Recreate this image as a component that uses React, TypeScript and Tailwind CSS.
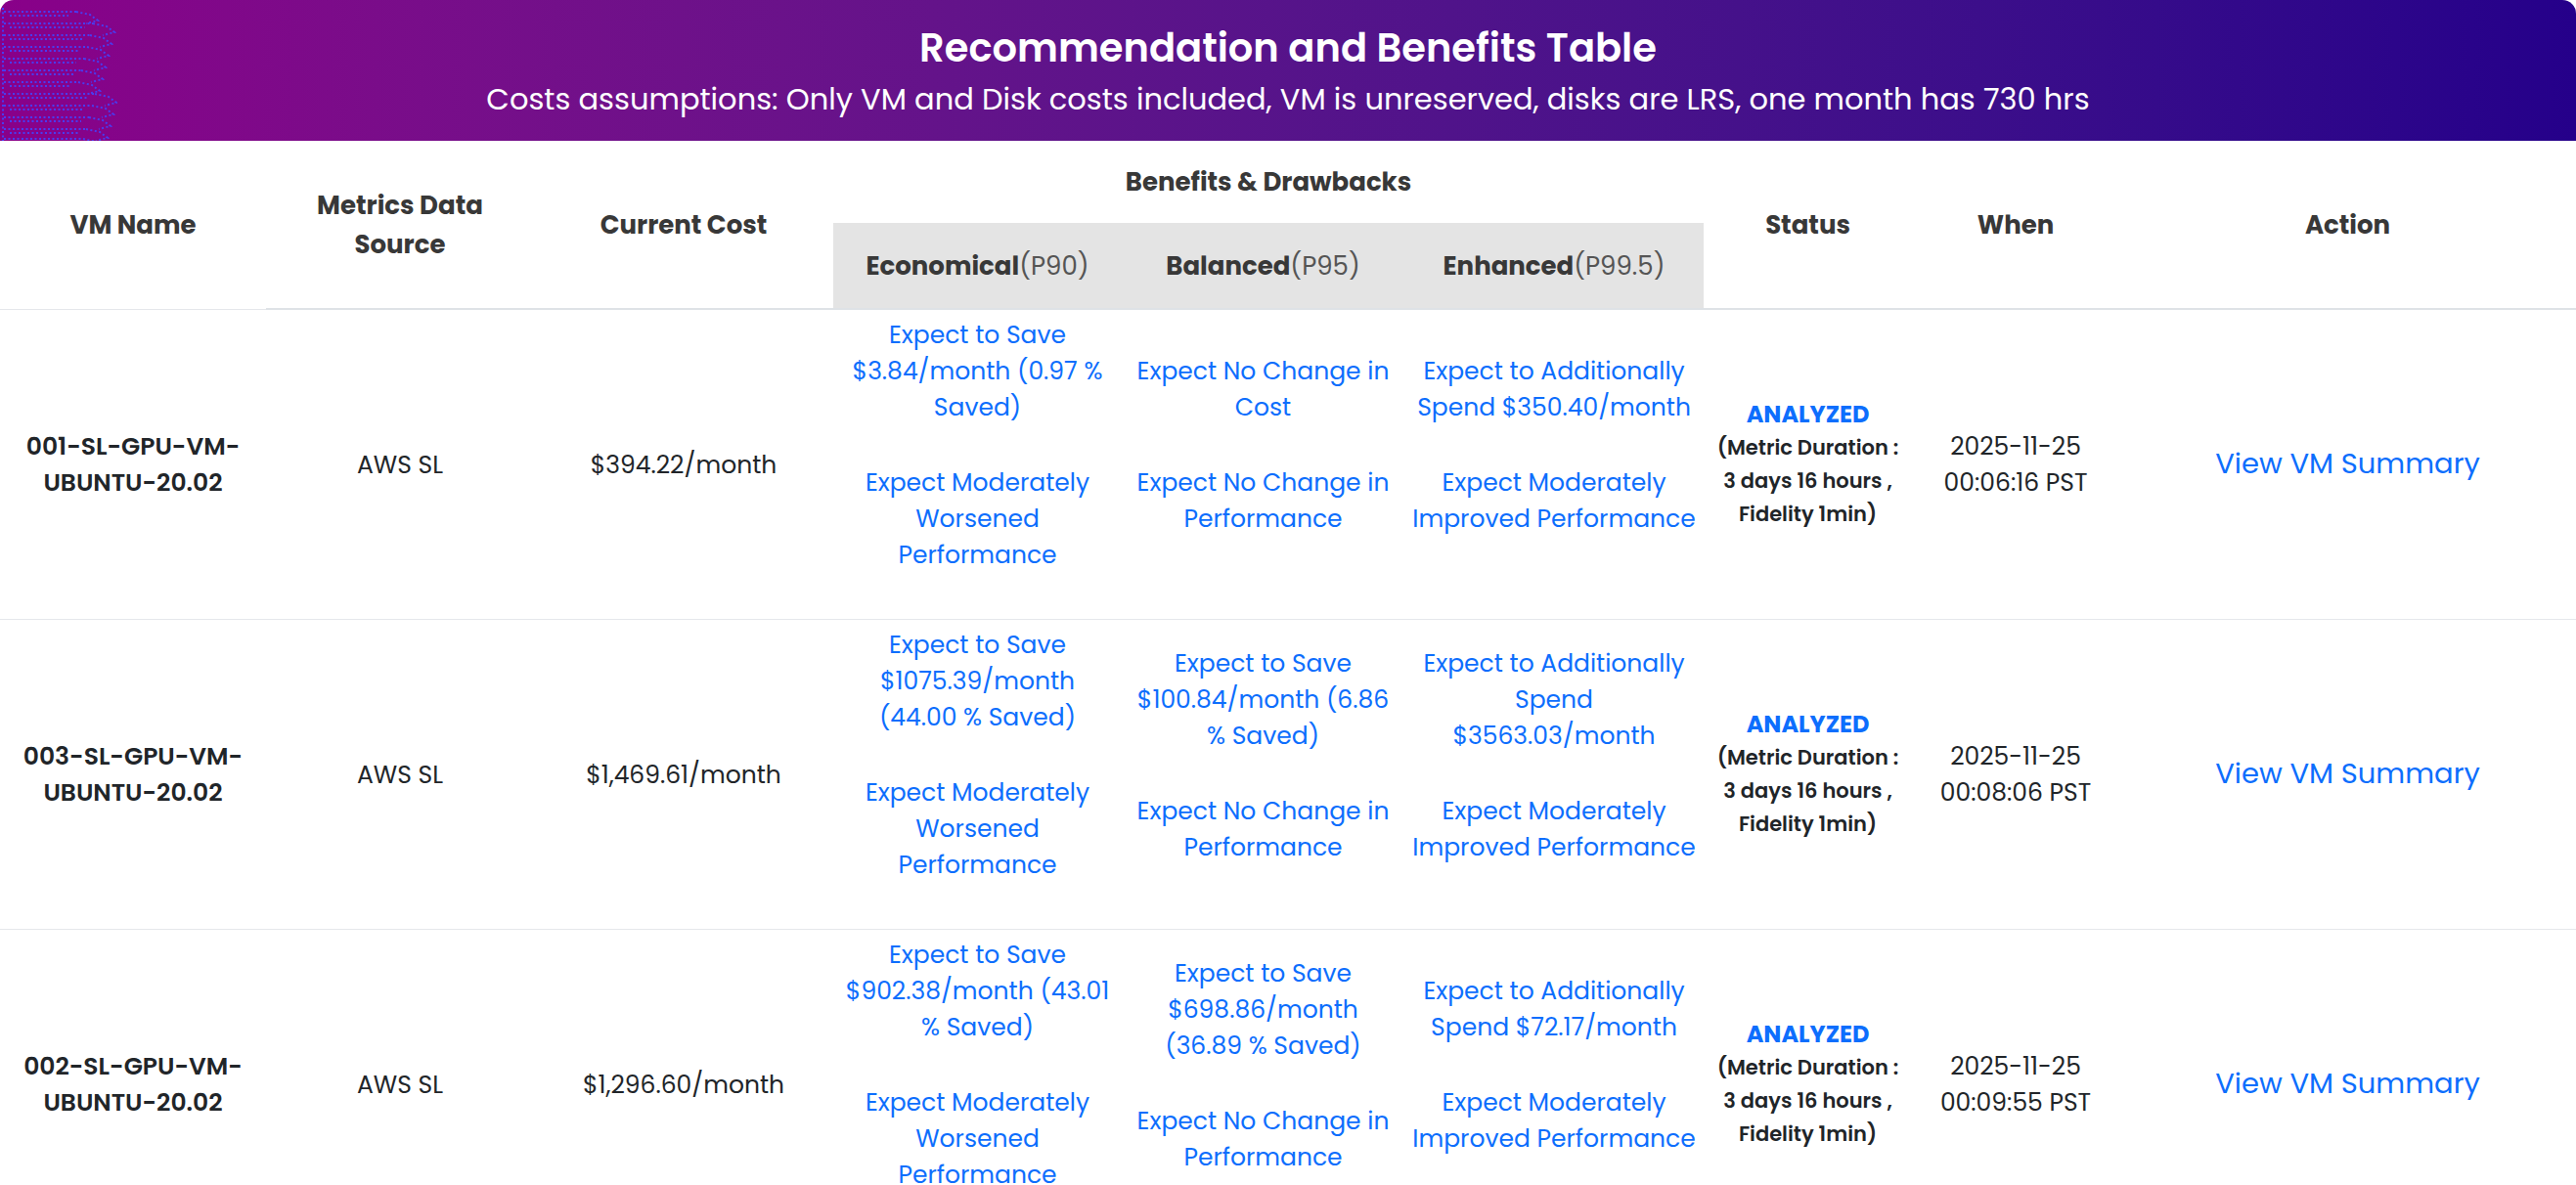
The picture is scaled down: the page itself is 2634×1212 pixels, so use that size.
import React from 'react';

type Row = {
  vm: string;
  source: string;
  cost: string;
  economical: string[];
  balanced: string[];
  enhanced: string[];
  date: string;
  time: string;
};

const rows: Row[] = [
  {
    vm: '001-SL-GPU-VM-UBUNTU-20.02',
    source: 'AWS SL',
    cost: '$394.22/month',
    economical: ['Expect to Save $3.84/month (0.97 % Saved)', 'Expect Moderately Worsened Performance'],
    balanced: ['Expect No Change in Cost', 'Expect No Change in Performance'],
    enhanced: ['Expect to Additionally Spend $350.40/month', 'Expect Moderately Improved Performance'],
    date: '2025-11-25',
    time: '00:06:16 PST',
  },
  {
    vm: '003-SL-GPU-VM-UBUNTU-20.02',
    source: 'AWS SL',
    cost: '$1,469.61/month',
    economical: ['Expect to Save $1075.39/month (44.00 % Saved)', 'Expect Moderately Worsened Performance'],
    balanced: ['Expect to Save $100.84/month (6.86 % Saved)', 'Expect No Change in Performance'],
    enhanced: ['Expect to Additionally Spend $3563.03/month', 'Expect Moderately Improved Performance'],
    date: '2025-11-25',
    time: '00:08:06 PST',
  },
  {
    vm: '002-SL-GPU-VM-UBUNTU-20.02',
    source: 'AWS SL',
    cost: '$1,296.60/month',
    economical: ['Expect to Save $902.38/month (43.01 % Saved)', 'Expect Moderately Worsened Performance'],
    balanced: ['Expect to Save $698.86/month (36.89 % Saved)', 'Expect No Change in Performance'],
    enhanced: ['Expect to Additionally Spend $72.17/month', 'Expect Moderately Improved Performance'],
    date: '2025-11-25',
    time: '00:09:55 PST',
  },
];

// dotted "circuit" lines on the left edge of the banner
function BannerPattern() {
  const lines = [8, 20, 32, 44, 56, 68, 80, 92, 104, 116, 128, 138];
  return (
    <svg width="120" height="140" viewBox="0 0 120 140" className="absolute left-0 top-1" fill="none">
      {lines.map((y, i) => {
        const len = 78 + ((i * 17) % 20);
        return (
          <g key={y} stroke="#4a3cf0" strokeWidth="2" strokeDasharray="2 2.5">
            <line x1="4" y1={y} x2={len} y2={y} />
            <line x1="10" y1={y + 4} x2={len - 8} y2={y + 4} />
            <polyline points={`${len},${y} ${len + 14},${y + 3} ${len + 22},${y + 9} ${len + 10},${y + 12}`} />
          </g>
        );
      })}
      <line x1="3" y1="4" x2="3" y2="140" stroke="#4a3cf0" strokeWidth="2" strokeDasharray="2 2.5" />
    </svg>
  );
}

function Outcome({ items, wide }: { items: string[]; wide?: boolean }) {
  return (
    <td className={wide ? 'px-[7.5px] py-[7px] align-middle text-center text-[#0d6efd]' : 'px-3 py-[7px] align-middle text-center text-[#0d6efd]'}>
      {items.map((t) => (
        <p key={t} className="mb-10">
          {t}
        </p>
      ))}
    </td>
  );
}

export default function App() {
  return (
    <div className="min-h-screen bg-white font-['Poppins','Open_Sans',sans-serif] text-[#212529]">
      <div className="relative h-[144px] overflow-hidden rounded-t-[14px] bg-gradient-to-r from-[#890089] to-[#25008a] pt-[21px] text-center text-white">
        <BannerPattern />
        <h1 className="text-[40px] font-semibold leading-[56px]">Recommendation and Benefits Table</h1>
        <p className="mt-[3px] text-[30.5px] leading-[44px]">
          Costs assumptions: Only VM and Disk costs included, VM is unreserved, disks are LRS, one month has 730 hrs
        </p>
      </div>

      <table className="w-full table-fixed border-collapse text-[25px] leading-[37px]">
        <colgroup>
          <col className="w-[272px]" />
          <col className="w-[274px]" />
          <col className="w-[306px]" />
          <col className="w-[295px]" />
          <col className="w-[289px]" />
          <col className="w-[306px]" />
          <col className="w-[213px]" />
          <col className="w-[212px]" />
          <col />
        </colgroup>
        <thead className="text-[26px] font-semibold leading-[40px] text-[#383838]">
          <tr className="h-[84px]">
            <th rowSpan={2} className="border-b border-[#e5e7eb] px-2 align-middle">VM Name</th>
            <th rowSpan={2} className="border-b-2 border-[#dee2e6] px-8 align-middle">Metrics Data Source</th>
            <th rowSpan={2} className="border-b-2 border-[#dee2e6] px-2 align-middle">Current Cost</th>
            <th colSpan={3} className="px-2 align-middle">Benefits &amp; Drawbacks</th>
            <th rowSpan={2} className="border-b-2 border-[#dee2e6] px-2 align-middle">Status</th>
            <th rowSpan={2} className="border-b-2 border-[#dee2e6] px-2 align-middle">When</th>
            <th rowSpan={2} className="border-b-2 border-[#dee2e6] px-2 align-middle">Action</th>
          </tr>
          <tr className="h-[88px] bg-[#e4e4e4]">
            <th className="border-b-2 border-[#dee2e6] px-2 align-middle">
              Economical<span className="font-normal text-[#555]">(P90)</span>
            </th>
            <th className="border-b-2 border-[#dee2e6] px-2 align-middle">
              Balanced<span className="font-normal text-[#555]">(P95)</span>
            </th>
            <th className="border-b-2 border-[#dee2e6] px-2 align-middle">
              Enhanced<span className="font-normal text-[#555]">(P99.5)</span>
            </th>
          </tr>
        </thead>
        <tbody>
          {rows.map((r) => (
            <tr key={r.vm} className="h-[316px] border-b border-[#e5e7eb]">
              <td className="px-3 text-center font-semibold text-[#212529]">{r.vm}</td>
              <td className="px-3 text-center">{r.source}</td>
              <td className="px-3 text-center">{r.cost}</td>
              <Outcome items={r.economical} />
              <Outcome items={r.balanced} />
              <Outcome items={r.enhanced} wide />
              <td className="px-[6px] text-center">
                <div className="text-[24px] font-bold leading-[34px] text-[#0d6efd]">ANALYZED</div>
                <div className="text-[21px] font-semibold leading-[34px] text-[#212529]">
                  (Metric Duration : 3 days 16 hours , Fidelity 1min)
                </div>
              </td>
              <td className="px-3 text-center">
                {r.date} {r.time}
              </td>
              <td className="px-3 text-center">
                <a href="#" className="text-[29px] text-[#0d6efd]">
                  View VM Summary
                </a>
              </td>
            </tr>
          ))}
        </tbody>
      </table>
    </div>
  );
}
